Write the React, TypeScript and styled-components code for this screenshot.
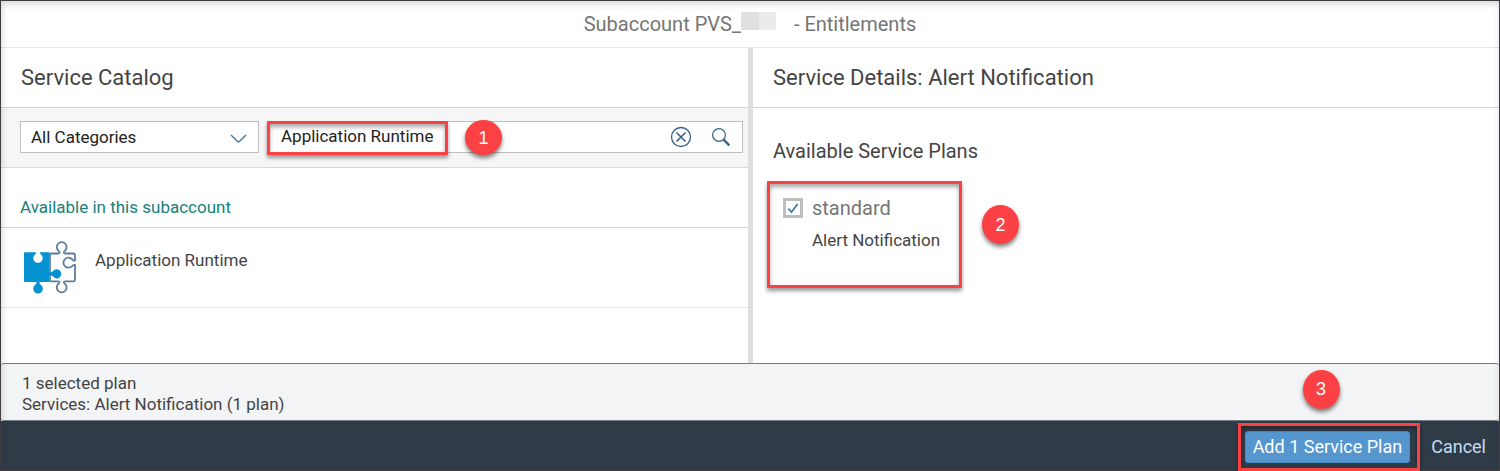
import React, { useState } from 'react';
import styled, { createGlobalStyle } from 'styled-components';

const GlobalStyle = createGlobalStyle`
  *, *::before, *::after { box-sizing: border-box; }
  body { margin: 0; background: #fff; }
  body, button, input, select { font-family: Roboto, "Liberation Sans", sans-serif; }
  h1, h2, h3, p { margin: 0; font-weight: 400; }
`;

const Dialog = styled.div`
  position: relative;
  display: flex;
  flex-direction: column;
  min-height: 100vh;
  border: 1px solid #3f3d42;
  background: #fff;
  color: #444;

  &::after {
    content: '';
    position: absolute;
    inset: 0;
    pointer-events: none;
    box-shadow: inset 1px 3px 6px rgba(60, 50, 60, 0.2);
  }
`;

const TitleBar = styled.header`
  display: flex;
  justify-content: center;
  align-items: center;
  height: 47px;
  border-bottom: 1px solid #e5e5e5;
`;

const Title = styled.h1`
  display: flex;
  align-items: center;
  font-size: 20px;
  line-height: 24px;
  color: #757575;
`;

const Redaction = styled.span`
  width: 35px;
  height: 18px;
  margin: 0 18px 6px 0;
  background: linear-gradient(90deg, #e0e0e0 50%, #ebebeb 50%);
`;

const Columns = styled.main`
  display: flex;
  flex: 1;
`;

const Catalog = styled.section`
  flex: 0 0 calc(50% - 2px);
  min-width: 0;
`;

const Details = styled.section`
  flex: 1;
  min-width: 0;
  border-left: 5px solid #dedede;
`;

const PanelTitle = styled.h2`
  height: 60px;
  padding: 0 20px;
  border-bottom: 1px solid #d4d4d4;
  font-size: 22px;
  line-height: 60px;
`;

const FilterBar = styled.div`
  display: flex;
  gap: 8px;
  height: 60px;
  padding: 13px 5px 14px 19px;
  border-bottom: 1px solid #dadada;
  background: #f6f6f6;
`;

const SelectField = styled.div`
  position: relative;
  flex: 0 0 239px;
`;

const CategorySelect = styled.select`
  appearance: none;
  width: 100%;
  height: 32px;
  padding: 0 40px 0 10px;
  border: 1px solid #bfbfbf;
  border-radius: 0;
  background: #fff;
  color: #222;
  font-size: 17px;
`;

const Chevron = styled.svg`
  position: absolute;
  right: 12px;
  top: 12px;
  pointer-events: none;
`;

const SearchField = styled.div`
  position: relative;
  display: flex;
  flex: 1;
  height: 32px;
  padding-right: 1px;
  border: 1px solid #bfbfbf;
  background: #fff;
`;

const SearchInput = styled.input`
  flex: 1;
  min-width: 0;
  height: 28px;
  padding: 0 0 0 13px;
  border: 0;
  outline: 0;
  background: transparent;
  color: #222;
  font-size: 17px;
`;

const IconButton = styled.button`
  display: grid;
  place-items: center;
  width: 40px;
  height: 30px;
  padding: 0;
  border: 0;
  background: transparent;
  color: #346187;
`;

const GroupTitle = styled.h3`
  height: 60px;
  padding: 27px 19px 0;
  border-bottom: 1px solid #d4d4d4;
  font-size: 17px;
  line-height: 24px;
  color: #188078;
`;

const ServiceItem = styled.div`
  display: flex;
  gap: 17px;
  height: 80px;
  padding: 13px 21px 0;
  border-bottom: 1px solid #e5e5e5;
  font-size: 17px;
`;

const ServiceName = styled.p`
  padding-top: 7px;
  line-height: 24px;
`;

const PlansTitle = styled.h3`
  padding: 31px 20px 0;
  font-size: 20px;
  line-height: 24px;
`;

const Plan = styled.div`
  position: relative;
  display: grid;
  grid-template-columns: 20px auto;
  column-gap: 9px;
  align-items: center;
  width: 195px;
  height: 107px;
  margin: 18px 14px 0;
  padding: 15px 16px 0;
  align-content: start;
  row-gap: 8px;
`;

const CheckField = styled.span`
  position: relative;
  display: block;
  width: 20px;
  height: 20px;
`;

const CheckBox = styled.input`
  appearance: none;
  width: 20px;
  height: 20px;
  margin: 0;
  border: 3px solid #bfbfbf;
  background: #fff;
  display: block;
`;

const CheckMark = styled.svg`
  position: absolute;
  inset: 0;
  pointer-events: none;
`;

const PlanLabel = styled.label`
  font-size: 20px;
  line-height: 24px;
  color: #757575;
`;

const PlanText = styled.p`
  grid-column: 2;
  font-size: 17px;
  line-height: 24px;
  white-space: nowrap;
`;

const Summary = styled.div`
  height: 58px;
  padding: 9px 21px 0;
  border: 1px solid #777c80;
  border-width: 1px 0;
  border-radius: 3px;
  background: #f3f4f6;
  font-size: 17px;
  line-height: 21px;
`;

const Footer = styled.footer`
  display: flex;
  justify-content: flex-end;
  align-items: center;
  gap: 11px;
  height: 49px;
  padding: 2px 3px 0 0;
  background: #2f3c48;
`;

const ActionHolder = styled.div`
  position: relative;
`;

const FooterButton = styled.button<{ $primary?: boolean }>`
  height: 32px;
  padding: ${(p) => (p.$primary ? '0 7px' : '0 10px')};
  border: ${(p) => (p.$primary ? '1px solid #4a8bc4' : '0')};
  border-radius: 3px;
  background: ${(p) => (p.$primary ? '#5496cd' : 'transparent')};
  color: ${(p) => (p.$primary ? '#fff' : '#c2dcf2')};
  font-size: 18px;
  white-space: nowrap;
`;

const Highlight = styled.span<{ $inset: string; $width?: string }>`
  position: absolute;
  inset: ${(p) => p.$inset};
  width: ${(p) => p.$width ?? 'auto'};
  border: 3px solid #fc4145;
  pointer-events: none;
  box-shadow: 0 3px 4px rgba(0, 0, 0, 0.4), inset 0 3px 4px rgba(0, 0, 0, 0.35);
  z-index: 1;
`;

const Step = styled.span<{ $left: string; $top: string; $height: number }>`
  position: absolute;
  left: ${(p) => p.$left};
  top: ${(p) => p.$top};
  display: grid;
  place-items: center;
  width: 37px;
  height: ${(p) => p.$height}px;
  border-radius: 50%;
  background: #fc4145;
  color: #fff;
  font: 400 18px/20px "Liberation Sans", sans-serif;
  box-shadow: 0 3px 4px rgba(0, 0, 0, 0.5);
  z-index: 2;
`;

const PuzzleIcon = () => (
  <svg width="56" height="56" viewBox="0 0 56 56" aria-hidden="true">
    <path
      d="M28 12.5H36Q37.6 12.5 37.6 11.5Q37.6 10.8 36.6 9.9A4.9 4.9 0 1 1 42.8 9.9Q41.8 10.8 41.8 11.5Q41.8 12.5 43.4 12.5H51.5Q53 12.5 53 14V19.6H52Q51.2 19.6 50.2 18.4A5 5 0 1 0 50.2 25Q51.2 23.8 52 23.8H53V38.8Q53 40.3 51.5 40.3H43.4Q41.8 40.3 41.8 41.2Q41.8 41.8 42.8 42.6A4.9 4.9 0 1 1 36.6 42.6Q37.6 41.8 37.6 41.2Q37.6 40.3 36 40.3H28Z"
      fill="#fff"
      stroke="#5d7d9e"
      strokeWidth="1.8"
      strokeLinejoin="round"
    />
    <path
      d="M3 11.3H14.2Q14.2 12.6 13 13.6A4.7 4.7 0 1 0 19 13.6Q17.8 12.6 17.8 11.3H27V31.2H28.8Q30 31.2 31 30A4.6 4.6 0 1 1 31 35.6Q30 34.4 28.8 34.4H27V41H17.6V42.2Q17.6 43 18.8 43.8A4.8 4.8 0 1 1 13.2 43.8Q14.4 43 14.4 42.2V41H3Q2 41 2 40V12.3Q2 11.3 3 11.3Z"
      fill="#0492d3"
    />
  </svg>
);

export default function App() {
  const [query, setQuery] = useState('Application Runtime');
  const [checked, setChecked] = useState(true);

  return (
    <>
      <GlobalStyle />
      <Dialog>
        <TitleBar>
          <Title>
            Subaccount PVS_
            <Redaction />- Entitlements
          </Title>
        </TitleBar>

        <Columns>
          <Catalog>
            <PanelTitle>Service Catalog</PanelTitle>
            <FilterBar>
              <SelectField>
                <CategorySelect aria-label="Category">
                  <option>All Categories</option>
                </CategorySelect>
                <Chevron width="17" height="11" viewBox="0 0 17 11" fill="none" stroke="#4677a3" strokeWidth="1.4">
                  <path d="M1 2L7.6 8.4Q8.5 9.2 9.4 8.4L16 2" />
                </Chevron>
              </SelectField>
              <SearchField>
                <SearchInput aria-label="Search" value={query} onChange={(e) => setQuery(e.target.value)} />
                <IconButton aria-label="Clear" onClick={() => setQuery('')}>
                  <svg width="22" height="22" viewBox="0 0 22 22" fill="none" stroke="currentColor">
                    <circle cx="11" cy="11" r="9.5" strokeWidth="1.3" />
                    <path d="M6.5 6.5L15.5 15.5M15.5 6.5L6.5 15.5" strokeWidth="1.6" />
                  </svg>
                </IconButton>
                <IconButton aria-label="Find">
                  <svg width="20" height="20" viewBox="0 0 20 20" fill="none" stroke="currentColor">
                    <circle cx="8" cy="8" r="6.4" strokeWidth="1.2" />
                    <path d="M12.5 12.5L18.3 18.3" strokeWidth="2.4" />
                  </svg>
                </IconButton>
                <Highlight $inset="-1px auto -3px -1px" $width="181px" />
                <Step $left="197px" $top="-2px" $height={35}>1</Step>
              </SearchField>
            </FilterBar>
            <GroupTitle>Available in this subaccount</GroupTitle>
            <ServiceItem>
              <PuzzleIcon />
              <ServiceName>Application Runtime</ServiceName>
            </ServiceItem>
          </Catalog>

          <Details>
            <PanelTitle>Service Details: Alert Notification</PanelTitle>
            <PlansTitle>Available Service Plans</PlansTitle>
            <Plan>
              <CheckField>
                <CheckBox
                  id="plan-standard"
                  type="checkbox"
                  checked={checked}
                  onChange={(e) => setChecked(e.target.checked)}
                />
                {checked && (
                  <CheckMark width="20" height="20" viewBox="0 0 20 20" fill="none" stroke="#427cac" strokeWidth="1.8">
                    <path d="M5.2 10.5L8.5 14L14.6 6" />
                  </CheckMark>
                )}
              </CheckField>
              <PlanLabel htmlFor="plan-standard">standard</PlanLabel>
              <PlanText>Alert Notification</PlanText>
              <Highlight $inset="0" />
              <Step $left="215px" $top="24px" $height={39}>2</Step>
            </Plan>
          </Details>
        </Columns>

        <Summary>
          <p>1 selected plan</p>
          <p>Services: Alert Notification (1 plan)</p>
        </Summary>
        <Footer>
          <ActionHolder>
            <FooterButton $primary>Add 1 Service Plan</FooterButton>
            <Highlight $inset="-8px -10px -8px -7px" />
            <Step $left="58px" $top="-61px" $height={39}>3</Step>
          </ActionHolder>
          <FooterButton>Cancel</FooterButton>
        </Footer>
      </Dialog>
    </>
  );
}
